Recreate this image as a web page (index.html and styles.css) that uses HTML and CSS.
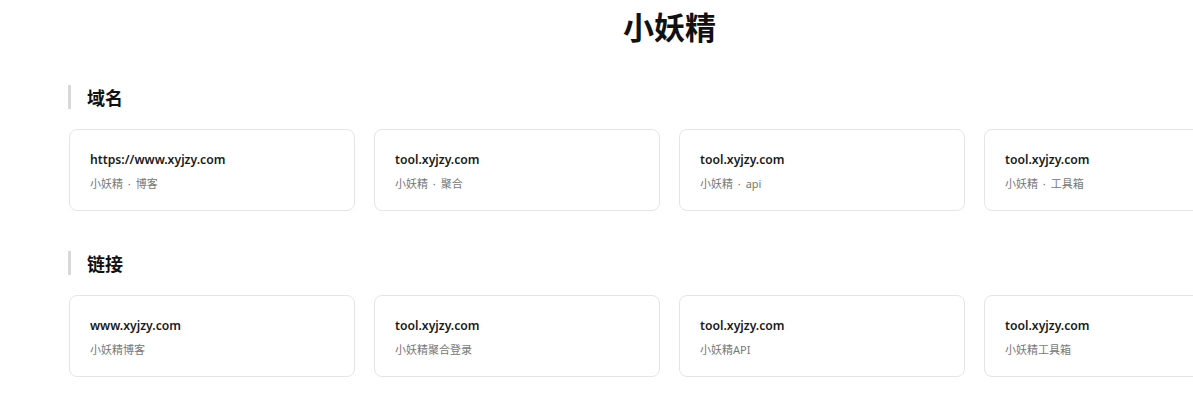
FILE: index.html
```html
<!DOCTYPE html>
<html lang="zh">
<head>
<meta charset="utf-8">
<title>小妖精</title>
<link rel="stylesheet" href="styles.css">
</head>
<body>
<div class="page">
  <h1 class="title">小妖精</h1>

  <section class="section">
    <h2 class="section-title">域名</h2>
    <div class="grid">
      <div class="card"><div class="card-title">https://www.xyjzy.com</div><div class="card-desc">小妖精 · 博客</div></div>
      <div class="card"><div class="card-title">tool.xyjzy.com</div><div class="card-desc">小妖精 · 聚合</div></div>
      <div class="card"><div class="card-title">tool.xyjzy.com</div><div class="card-desc">小妖精 · api</div></div>
      <div class="card"><div class="card-title">tool.xyjzy.com</div><div class="card-desc">小妖精 · 工具箱</div></div>
    </div>
  </section>

  <section class="section">
    <h2 class="section-title">链接</h2>
    <div class="grid">
      <div class="card"><div class="card-title">www.xyjzy.com</div><div class="card-desc">小妖精博客</div></div>
      <div class="card"><div class="card-title">tool.xyjzy.com</div><div class="card-desc">小妖精聚合登录</div></div>
      <div class="card"><div class="card-title">tool.xyjzy.com</div><div class="card-desc">小妖精API</div></div>
      <div class="card"><div class="card-title">tool.xyjzy.com</div><div class="card-desc">小妖精工具箱</div></div>
    </div>
  </section>
</div>
</body>
</html>
```

FILE: styles.css
```css
html, body {
  margin: 0;
  padding: 0;
  background: #ffffff;
  overflow: hidden;
}
body {
  font-family: "Noto Sans", "Noto Sans CJK SC", sans-serif;
  color: #222;
}
.page {
  margin-left: 69px;
  width: 1201px;
}
.title {
  margin: 0;
  padding-top: 6px;
  font-size: 31px;
  line-height: 40px;
  font-weight: 700;
  text-align: center;
  color: #111;
  font-family: "Noto Sans CJK SC", sans-serif;
}
.section {
  margin-top: 39px;
}
.section + .section {
  margin-top: 40px;
}
.section-title {
  margin: 0 0 0 -1px;
  border-left: 3px solid #d9d9d9;
  padding-left: 16px;
  font-size: 18px;
  line-height: 24px;
  font-weight: 700;
  color: #111;
  font-family: "Noto Sans CJK SC", sans-serif;
}
.grid {
  margin-top: 20px;
  display: grid;
  grid-template-columns: repeat(4, 286px);
  gap: 19px;
}
.card {
  box-sizing: border-box;
  height: 82px;
  border: 1px solid #e5e5e5;
  border-radius: 8px;
  background: #fff;
  padding: 21px 20px 15px;
}
.card-title {
  font-size: 12.2px;
  line-height: 18px;
  font-weight: 600;
  color: #1a1a1a;
}
.card-desc {
  margin-top: 7px;
  font-size: 11px;
  line-height: 16px;
  color: #777;
  word-spacing: 2px;
  font-family: "Noto Sans", "Noto Sans CJK SC", sans-serif;
}
```
